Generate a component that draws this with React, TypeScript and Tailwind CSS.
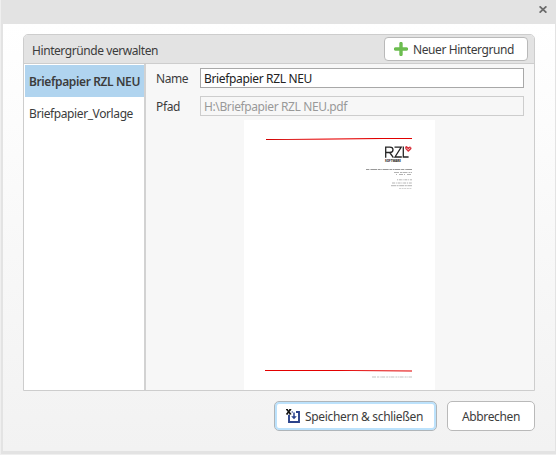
import React from "react";

function Label({ children, width, className = "" }: { children: string; width: number; className?: string }) {
  const ref = React.useRef<HTMLSpanElement>(null);
  const [spacing, setSpacing] = React.useState(0);
  // Tighten or loosen the letters so that a label fills its intended width.
  React.useLayoutEffect(() => {
    if (ref.current) {
      setSpacing((width - ref.current.getBoundingClientRect().width) / children.length);
    }
  }, [children, width]);
  return (
    <span ref={ref} className={`inline-block whitespace-pre ${className}`} style={{ letterSpacing: spacing }}>
      {children}
    </span>
  );
}

function CloseIcon() {
  return (
    <svg width="8" height="7" viewBox="0 0 8 7">
      <path d="M.6 .3L7.4 6.7M7.4 .3L.6 6.7" stroke="#6b6b6b" strokeWidth="1.7" />
    </svg>
  );
}

function PlusIcon() {
  return (
    <svg width="14" height="14" viewBox="0 0 14 14" className="shrink-0">
      <path d="M7 1.6V12.4M1.6 7H12.4" stroke="#6cbd50" strokeWidth="3.4" strokeLinecap="round" />
    </svg>
  );
}

function SaveCloseIcon() {
  return (
    <svg width="15" height="16" viewBox="0 0 15 16" className="shrink-0">
      <path d="M6.5 4H3V14H13V4H10" fill="none" stroke="#2b438c" strokeWidth="1.9" />
      <path d="M8 4.5V9.5" stroke="#2b438c" strokeWidth="1.5" />
      <path d="M5.2 8.2H10.8L8 11.2Z" fill="#2b438c" />
      <path d="M0 1H5.8V6.8H0Z" fill="#fff" />
      <path d="M.9 1.4L4.5 6M4.5 1.4L.9 6" stroke="#111" strokeWidth="1.6" />
      <path d="M0 1.5H2M3.3 1.5H5.3M0 6H2M3.3 6H5.3" stroke="#111" />
    </svg>
  );
}

function Letterhead() {
  return (
    <svg width="191" height="270" viewBox="0 0 191 270" className="block bg-white">
      <defs>
        <linearGradient id="fadeOut">
          <stop stopColor="#d00000" />
          <stop offset=".4" stopColor="#ef5a5a" />
          <stop offset=".8" stopColor="#fff" />
        </linearGradient>
        <linearGradient id="fadeIn">
          <stop offset=".15" stopColor="#fff" />
          <stop offset=".4" stopColor="#f78f8f" />
          <stop offset=".75" stopColor="#e00000" />
        </linearGradient>
        <linearGradient id="bottomRule">
          <stop offset=".5" stopColor="#e30000" />
          <stop offset="1" stopColor="#f07a7a" />
        </linearGradient>
        <linearGradient id="bottomShadow">
          <stop offset=".6" stopColor="#fff" />
          <stop offset="1" stopColor="#f07a7a" />
        </linearGradient>
      </defs>
      <rect x="22" y="18" width="146" height="1" fill="url(#fadeIn)" />
      <rect x="22" y="19" width="146" height="1" fill="url(#fadeOut)" />
      <g fill="none" stroke="#252525" strokeWidth="1.3">
        <path d="M141.7 37.7V27.1H145.9Q149 27.1 149 29.8T145.9 32.5H142M145.7 32.5L149.4 37.7" />
        <path d="M150.5 27.1H157.2L151 37H157.8M159.3 26.5V37H164.6" />
      </g>
      <path d="M164.2 32.1L161.4 29.1Q160.4 26.5 162.6 26.1L164.2 27.2Q166.9 25.3 167.6 28.3Q167.5 29.5 164.2 32.1Z" fill="#d7323c" />
      <path d="M162.5 28L164.2 29.8L166.3 27.8" fill="none" stroke="#fff" strokeWidth=".6" />
      <text x="141" y="41.9" fontSize="3" fontWeight="800" textLength="16" lengthAdjust="spacingAndGlyphs" fill="#222">SOFTWARE</text>
      <g stroke="#b4b4b4" strokeWidth="1">
        <path d="M122 49.5H168" strokeDasharray="3 .6 1 .4 6 .7" stroke="#999" />
        <path d="M150 52.5H168" strokeDasharray="5 1 2 .5" />
        <path d="M152 54.5H168" strokeDasharray="1 2 4 1" />
        <path d="M153 59.8H168" strokeDasharray="1 .8 3 .8" />
        <path d="M148 63H168" strokeDasharray="3 .8 1 .8" />
        <path d="M147 65.7H168" strokeDasharray="5 .6 2 .6" />
        <path d="M155 68.5H168" strokeDasharray="2 .6" strokeWidth=".6" />
        <path d="M128 257H168" strokeDasharray="4 1 2 .7 1 .5" strokeWidth=".8" />
      </g>
      <rect x="21" y="250" width="147" height="1" fill="url(#bottomRule)" />
      <rect x="21" y="251" width="147" height="1" fill="url(#bottomShadow)" />
    </svg>
  );
}

export default function App() {
  return (
    <main className="flex h-[455px] w-[556px] flex-col border-b border-l border-[#efefef] bg-[#e3e3e3] font-['Noto_Sans','Open_Sans',sans-serif] text-[12px] leading-4 text-[#3c3c3c]">
      <header className="flex h-6 shrink-0 items-start justify-end pt-[6px] pr-[9px]">
        <button aria-label="Schließen"><CloseIcon /></button>
      </header>
      <div className="mr-px mb-[3px] ml-[2px] flex h-[427px] flex-col bg-linear-to-b from-white to-[#f2f2f2] pt-[10px] pl-5">
        <section className="flex h-[357px] w-[512px] shrink-0 flex-col overflow-hidden rounded-t-[5px] border border-[#cdcdcd]">
          <div className="flex h-[29px] shrink-0 items-center justify-between border-b border-[#cdcdcd] bg-[#e3e3e3] pr-[6px] pl-2">
            <h1 className="mt-[3px]"><Label width={126}>Hintergründe verwalten</Label></h1>
            <button className="flex h-6 w-[144px] items-center rounded-[4px] border border-[#b9b9b9] bg-white pl-[9px]">
              <PlusIcon />
              <Label width={101} className="mt-[2px] ml-[5px]">Neuer Hintergrund</Label>
            </button>
          </div>
          <div className="flex min-h-0 flex-1">
            <nav className="flex w-[122px] shrink-0 flex-col border-r-2 border-[#d2d2d2] bg-white pt-px pl-px">
              <div className="flex h-8 w-[119px] items-center bg-[#b0d4ef] pl-1 font-semibold">
                <Label width={111} className="mt-px">Briefpapier RZL NEU</Label>
              </div>
              <div className="flex h-8 items-center pl-1">
                <Label width={104} className="mt-[2px]">Briefpapier_Vorlage</Label>
              </div>
            </nav>
            <div className="flex flex-1 flex-col bg-[#f7f7f7] pt-1 pl-[10px]">
              <div className="flex h-5 items-center">
                <div className="w-11"><Label width={32} className="mt-[2px]">Name</Label></div>
                <div className="flex h-5 w-[324px] items-center border border-[#a8a8a8] bg-white pl-[3px] text-[#222]">
                  <Label width={108} className="mt-px">Briefpapier RZL NEU</Label>
                </div>
              </div>
              <div className="mt-2 flex h-5 items-center">
                <div className="w-11"><Label width={24} className="mt-[2px]">Pfad</Label></div>
                <div className="flex h-5 w-[324px] items-center border border-[#cdcdcd] pl-[3px] text-[#999]">
                  <Label width={143} className="mt-px">H:\Briefpapier RZL NEU.pdf</Label>
                </div>
              </div>
              <div className="mt-1 ml-[88px]"><Letterhead /></div>
            </div>
          </div>
        </section>
        <footer className="mt-[10px] flex w-[512px] justify-end gap-[10px]">
          <button className="flex h-[30px] w-[163px] items-center rounded-[5px] border border-[#afb5b9] bg-white pl-[11px] inset-ring-2 inset-ring-[#bce2fc]">
            <SaveCloseIcon />
            <Label width={118} className="mt-[2px] ml-1">Speichern &amp; schließen</Label>
          </button>
          <button className="flex h-[30px] w-[88px] items-center justify-center rounded-[5px] border border-[#b9b9b9] bg-white">
            <Label width={58} className="mt-[2px]">Abbrechen</Label>
          </button>
        </footer>
      </div>
    </main>
  );
}
